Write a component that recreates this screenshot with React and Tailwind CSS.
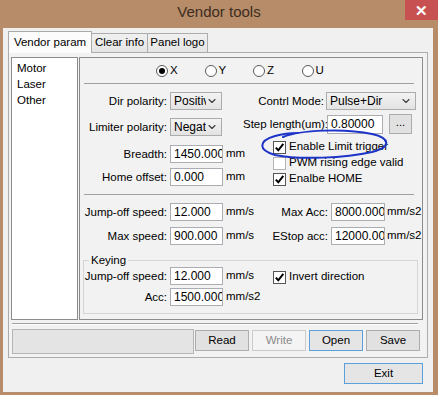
import React from "react";
import { ChevronDown } from "lucide-react";

function Input({ value, className = "" }) {
  return (
    <div
      className={`h-[18px] shrink-0 bg-white border border-[#abadb3] pl-[3px] text-[12px] leading-[16px] overflow-hidden whitespace-nowrap ${className}`}
    >
      {value}
    </div>
  );
}

function Combo({ value, className = "" }) {
  return (
    <div
      className={`h-[18px] shrink-0 flex items-center border border-[#acacac] bg-linear-to-b from-[#f3f3f3] to-[#e3e3e3] ${className}`}
    >
      <span className="flex-1 pl-[3px] text-[12px] leading-[16px] overflow-hidden whitespace-nowrap">
        {value}
      </span>
      <ChevronDown size={12} strokeWidth={2.2} className="mr-[3px] shrink-0 text-[#3c3c3c]" />
    </div>
  );
}

function Check({ checked, label }) {
  return (
    <div className="flex items-center h-[16px]">
      <div
        className={`w-[13px] h-[13px] shrink-0 bg-white border flex items-center justify-center ${
          checked ? "border-[#555555]" : "border-[#b4b4b4]"
        }`}
      >
        {checked && (
          <svg width="11" height="11" viewBox="0 0 11 11">
            <path d="M1.8 5.6 L4.3 8.3 L9.3 1.8" stroke="#000" strokeWidth="2" fill="none" />
          </svg>
        )}
      </div>
      <span className="ml-[3px] whitespace-nowrap">{label}</span>
    </div>
  );
}

function Radio({ checked, label }) {
  return (
    <div className="flex items-center w-[48.5px]">
      <div className="w-[12px] h-[12px] rounded-full border border-[#5a5a5a] bg-white flex items-center justify-center">
        {checked && <div className="w-[6px] h-[6px] rounded-full bg-black" />}
      </div>
      <span className="ml-[2px]">{label}</span>
    </div>
  );
}

function Label({ children, className = "" }) {
  return (
    <div className={`shrink-0 text-right whitespace-nowrap leading-[18px] ${className}`}>
      {children}
    </div>
  );
}

function Btn({ children, className = "" }) {
  return (
    <div
      className={`h-[21px] w-[54px] flex items-center justify-center border ${className}`}
    >
      {children}
    </div>
  );
}

export default function App() {
  return (
    <div className="relative w-[438px] h-[395px] bg-[#b78c68] flex flex-col font-['Liberation_Sans',Arial,sans-serif] text-[11.5px] text-black">
      {/* title bar */}
      <div className="h-[28px] flex items-start shrink-0">
        <div className="w-[33px]" />
        <div className="flex-1 text-center pt-[2px] text-[15px] leading-[20px] text-[#3b2d22]">
          Vendor tools
        </div>
        <div className="w-[33px] h-[20px] bg-[#c75050] flex items-center justify-center text-white text-[15px] font-bold leading-none">
          ✕
        </div>
      </div>

      {/* client */}
      <div className="flex-1 ml-[3px] mr-[5px] mb-[3px] bg-[#f0f0f0] flex flex-col">
        {/* tabs */}
        <div className="h-[24px] pl-[5px] flex items-end">
          <div className="relative z-10 -mb-[1px] h-[22px] w-[84px] bg-[#fcfcfc] border border-b-0 border-[#acacac] flex items-center justify-center">
            Vendor param
          </div>
          <div className="h-[19px] w-[56px] bg-linear-to-b from-[#f0f0f0] to-[#e5e5e5] border border-b-0 border-l-0 border-[#acacac] flex items-center justify-center">
            Clear info
          </div>
          <div className="h-[19px] w-[60px] bg-linear-to-b from-[#f0f0f0] to-[#e5e5e5] border border-b-0 border-l-0 border-[#acacac] flex items-center justify-center">
            Panel logo
          </div>
        </div>

        {/* tab panel */}
        <div className="mx-[5px] h-[306px] border border-[#acacac] bg-[#f2f2f2] flex flex-col">
          <div className="pt-[4px] flex">
            {/* list */}
            <div className="ml-[2px] w-[67px] h-[263px] bg-white border border-[#8c8c8c] pl-[5px] pt-[2px] leading-[16px]">
              <div>Motor</div>
              <div>Laser</div>
              <div>Other</div>
            </div>

            {/* right box */}
            <div className="ml-[1px] w-[344px] h-[263px] border border-[#8c8c8c] flex flex-col">
              <div className="mt-[6px] h-[14px] ml-[76px] flex items-center">
                <Radio checked label="X" />
                <Radio label="Y" />
                <Radio label="Z" />
                <Radio label="U" />
              </div>
              <div className="mt-[5px] ml-[4px] w-[330px] h-[1px] bg-[#a0a0a0]" />

              {/* section 1 */}
              <div className="flex">
                <div className="w-[163px] flex flex-col">
                  <div className="mt-[8px] flex">
                    <Label className="w-[87px]">Dir polarity:</Label>
                    <Combo value="Positive" className="ml-[3px] w-[52px]" />
                  </div>
                  <div className="mt-[8px] flex">
                    <Label className="w-[87px]">Limiter polarity:</Label>
                    <Combo value="Negative" className="ml-[3px] w-[52px]" />
                  </div>
                  <div className="mt-[9px] flex items-center">
                    <Label className="w-[87px]">Breadth:</Label>
                    <Input value="1450.000" className="ml-[3px] w-[53px]" />
                    <span className="ml-[3px]">mm</span>
                  </div>
                  <div className="mt-[5px] flex items-center">
                    <Label className="w-[87px]">Home offset:</Label>
                    <Input value="0.000" className="ml-[3px] w-[53px]" />
                    <span className="ml-[3px]">mm</span>
                  </div>
                </div>
                <div className="flex-1 flex flex-col">
                  <div className="mt-[8px] flex">
                    <Label className="w-[81px]">Contrl Mode:</Label>
                    <Combo value="Pulse+Dir" className="ml-[2px] w-[90px]" />
                  </div>
                  <div className="mt-[4px] flex items-center">
                    <Label className="w-[81px]">Step length(um):</Label>
                    <Input value="0.80000" className="ml-[3px] w-[56px] h-[19px]" />
                    <div className="ml-[6px] w-[23px] h-[20px] border border-[#adadad] bg-[#e1e1e1] flex items-center justify-center leading-none pb-[3px]">
                      ...
                    </div>
                  </div>
                  <div className="mt-[5px] ml-[30px] flex flex-col">
                    <Check checked label="Enable Limit trigger" />
                    <Check label="PWM rising edge valid" />
                    <Check checked label="Enalbe HOME" />
                  </div>
                </div>
              </div>

              <div className="mt-[7px] ml-[4px] w-[330px] h-[1px] bg-[#a0a0a0]" />

              {/* section 2 */}
              <div className="mt-[8px] flex items-center">
                <div className="w-[163px] flex items-center">
                  <Label className="w-[87px]">Jump-off speed:</Label>
                  <Input value="12.000" className="ml-[3px] w-[53px]" />
                  <span className="ml-[3px]">mm/s</span>
                </div>
                <Label className="w-[85px]">Max Acc:</Label>
                <Input value="8000.000" className="ml-[3px] w-[54px]" />
                <span className="ml-[2px]">mm/s2</span>
              </div>
              <div className="mt-[6px] flex items-center">
                <div className="w-[163px] flex items-center">
                  <Label className="w-[87px]">Max speed:</Label>
                  <Input value="900.000" className="ml-[3px] w-[53px]" />
                  <span className="ml-[3px]">mm/s</span>
                </div>
                <Label className="w-[85px]">EStop acc:</Label>
                <Input value="12000.000" className="ml-[3px] w-[54px]" />
                <span className="ml-[2px]">mm/s2</span>
              </div>

              {/* keying */}
              <fieldset className="mt-[8px] ml-[3px] w-[335px] border border-[#d5d5d5] pb-[7px]">
                <legend className="ml-[5px] px-[2px] leading-[14px]">Keying</legend>
                <div className="flex items-center">
                  <div className="w-[159px] flex items-center">
                    <Label className="w-[83px]">Jump-off speed:</Label>
                    <Input value="12.000" className="ml-[3px] w-[53px]" />
                    <span className="ml-[3px]">mm/s</span>
                  </div>
                  <div className="ml-[30px] mt-[2px]">
                    <Check checked label="Invert direction" />
                  </div>
                </div>
                <div className="mt-[3px] flex items-center">
                  <Label className="w-[83px]">Acc:</Label>
                  <Input value="1500.000" className="ml-[3px] w-[53px]" />
                  <span className="ml-[3px]">mm/s2</span>
                </div>
              </fieldset>
            </div>
          </div>

          <div className="mt-[3px] ml-[3px] w-[406px] h-[2px] border-t border-[#a0a0a0] border-b border-b-white" />

          <div className="mt-[4px] flex items-start">
            <div className="ml-[3px] w-[182px] h-[25px] border border-[#b5b5b5] bg-[#e4e4e4]" />
            <div className="mt-[1px] ml-[1px] flex gap-[3px]">
              <Btn className="border-[#adadad] bg-[#e1e1e1]">Read</Btn>
              <Btn className="border-[#cbcbcb] bg-[#f4f4f4] text-[#8b8b8b]">Write</Btn>
              <Btn className="border-[#5b9fdc] bg-[#e5e5e5]">Open</Btn>
              <Btn className="border-[#adadad] bg-[#e1e1e1]">Save</Btn>
            </div>
          </div>
        </div>

        <div className="mt-[5px] flex justify-end">
          <div className="mr-[10px] w-[79px] h-[21px] border border-[#5b9fdc] bg-[#e5e5e5] flex items-center justify-center">
            Exit
          </div>
        </div>
      </div>

      {/* blue pen annotation */}
      <svg
        className="absolute left-0 top-0 pointer-events-none"
        width="438"
        height="395"
        viewBox="0 0 438 395"
      >
        <path
          d="M283 137 C 300 130, 345 128, 372 134 C 390 138, 392 147, 372 152 C 345 158, 300 160, 275 155 C 258 150, 258 141, 275 136 C 282 134, 290 133, 298 133"
          stroke="#1d34c8"
          strokeWidth="2"
          fill="none"
          strokeLinecap="round"
        />
      </svg>
    </div>
  );
}
